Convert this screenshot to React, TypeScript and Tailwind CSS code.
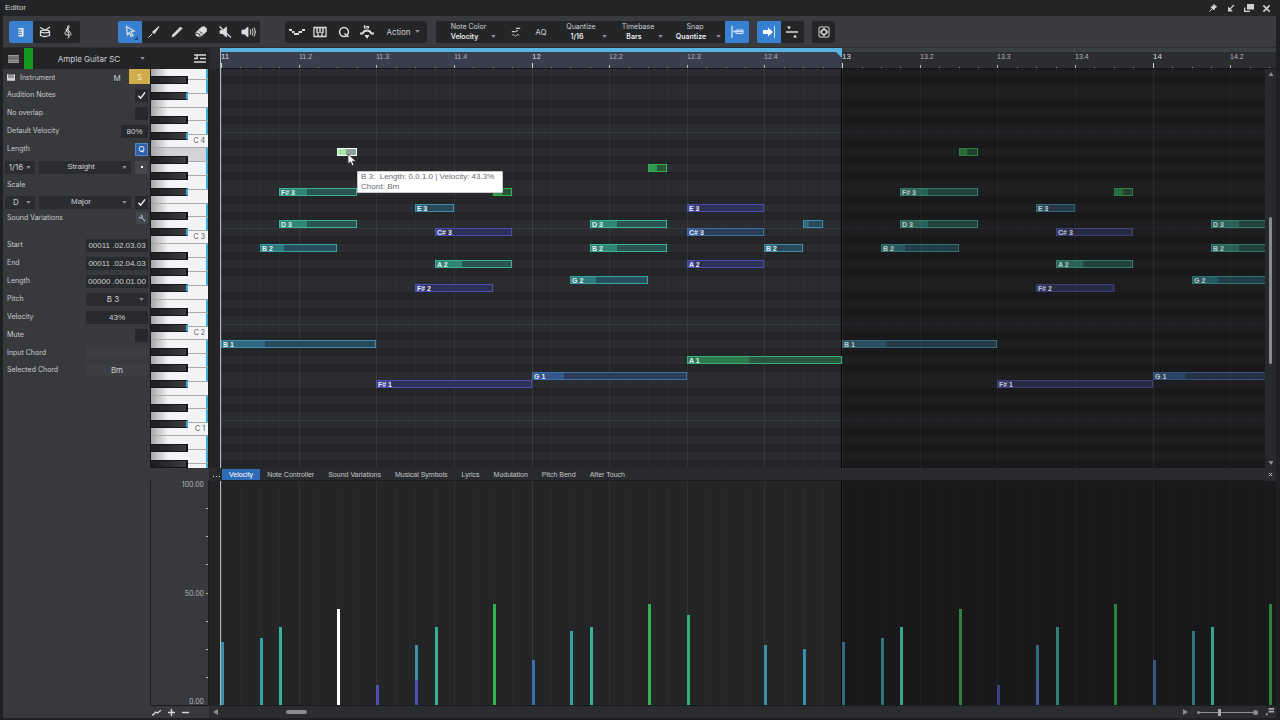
import React, { useState } from 'react';

interface Tone {
  line: string;
  fill: string;
  deep: string;
}

interface Note {
  start: number;
  length: number;
  pitch: number;
  velocity: number;
  tone: string;
}

const STEP = 19.41;
const ROW = 8;
const TOP_PITCH = 83;
const LOOP_END = 32;
const NAMES = ['C', 'C#', 'D', 'D#', 'E', 'F', 'F#', 'G', 'G#', 'A', 'A#', 'B'];
const SCALE = [1, 2, 4, 6, 7, 9, 11];

const TONES: Record<string, Tone> = {
  blue: { line: '#3b8fad', fill: '#29495a', deep: '#306a80' },
  cyan: { line: '#36a0a6', fill: '#28505a', deep: '#2f7a7e' },
  teal: { line: '#3bb097', fill: '#29544f', deep: '#318576' },
  mint: { line: '#35b072', fill: '#29593f', deep: '#2c7a52' },
  green: { line: '#35b04f', fill: '#28563a', deep: '#309848' },
  steel: { line: '#3d6fb0', fill: '#2c3d55', deep: '#33578c' },
  violet: { line: '#4c4faf', fill: '#2e3157', deep: '#3e4292' },
  picked: { line: '#ffffff', fill: '#8fa394', deep: '#a5e6aa' },
};

const n = (start: number, length: number, pitch: number, velocity: number, tone: string): Note => ({ start, length, pitch, velocity, tone });

const phrase = (at: number): Note[] => [
  n(at, 8, 47, 28, 'blue'),
  n(at + 2, 4, 59, 30, 'cyan'),
  n(at + 3, 4, 66, 35, 'teal'),
  n(at + 3, 4, 62, 35, 'teal'),
  n(at + 8, 8, 42, 9, 'violet'),
  n(at + 10, 2, 64, 27, 'blue'),
  n(at + 10, 4, 54, 11, 'violet'),
  n(at + 11, 4, 61, 9, 'violet'),
  n(at + 11, 4, 57, 35, 'teal'),
  n(at + 14, 1, 66, 45, 'green'),
  n(at + 16, 8, 43, 20, 'steel'),
  n(at + 18, 4, 55, 33, 'cyan'),
  n(at + 19, 4, 62, 35, 'teal'),
  n(at + 19, 4, 59, 35, 'teal'),
  n(at + 22, 1, 69, 45, 'green'),
];

const NOTES: Note[] = [
  ...phrase(0),
  n(6, 1, 71, 43, 'picked'),
  n(24, 8, 45, 40, 'mint'),
  n(24, 4, 64, 9, 'violet'),
  n(24, 4, 61, 17, 'steel'),
  n(24, 4, 57, 9, 'violet'),
  n(28, 2, 59, 27, 'blue'),
  n(30, 1, 62, 25, 'blue'),
  ...phrase(32),
  n(38, 1, 71, 43, 'green'),
];

const STEMS = [...NOTES]
  .filter(note => !(note.velocity === 9 && note.length === 4) && note.velocity !== 17)
  .sort((a, b) => b.velocity - a.velocity);

const ROWS = Array.from({ length: 52 }, (_, i) => TOP_PITCH - i);
const STEPS = Array.from({ length: 120 }, (_, i) => i);
const BEATS = Array.from({ length: 14 }, (_, i) => i);

const xAt = (step: number) => Math.round(step * STEP);
const noteName = (pitch: number) => `${NAMES[pitch % 12]} ${Math.floor(pitch / 12) - 2}`;

const Caret = () => (
  <svg viewBox="0 0 6 4" className="w-[5px] h-[3px] shrink-0 fill-[#8d8e91] pointer-events-none">
    <path d="M0 0h6L3 4z" />
  </svg>
);

interface PickerProps {
  id: string;
  value: string;
  className?: string;
  bold?: boolean;
}

const Picker: React.FC<PickerProps> = ({ id, value, className, bold }) => (
  <div className={`relative flex items-center ${className ?? ''}`}>
    <select
      id={id}
      aria-label={id}
      defaultValue={value}
      className={`appearance-none w-full bg-transparent text-center outline-none pr-2 ${bold ? 'font-semibold text-[#ededee]' : 'text-[#cfd0d2]'}`}
    >
      <option>{value}</option>
    </select>
    <span className="absolute right-1 flex"><Caret /></span>
  </div>
);

const Check: React.FC<{ id: string; on?: boolean }> = ({ id, on }) => (
  <span className="relative flex size-[13px] items-center justify-center bg-[#27282b]">
    <input id={id} type="checkbox" aria-label={id} defaultChecked={on} className="peer absolute inset-0 appearance-none" />
    <svg viewBox="0 0 10 10" className="size-[9px] hidden peer-checked:block pointer-events-none" fill="none" stroke="#f3f3f3" strokeWidth="1.6">
      <path d="M1.5 5.2 4 8 9 1.5" />
    </svg>
  </span>
);

const Field: React.FC<{ id: string; value: string; className?: string }> = ({ id, value, className }) => (
  <input
    id={id}
    defaultValue={value}
    className={`h-[13px] bg-[#292a2d] text-center font-['Liberation_Sans',sans-serif] text-[8px] text-[#cfd0d2] outline-none ${className ?? 'w-[62px]'}`}
  />
);

const Row: React.FC<{ label: string; htmlFor?: string; className?: string; children?: React.ReactNode }> = ({ label, htmlFor, className, children }) => (
  <div className={`flex items-center justify-between pl-1 pr-[2px] ${className ?? 'h-[18px]'}`}>
    {htmlFor ? <label htmlFor={htmlFor}>{label}</label> : <span>{label}</span>}
    {children}
  </div>
);

const ToolButton: React.FC<{ label: string; active?: boolean; children: React.ReactNode }> = ({ label, active, children }) => (
  <button aria-label={label} className={`relative flex h-[22px] flex-1 items-center justify-center ${active ? 'bg-[#3a80d0]' : ''}`}>
    <svg viewBox="0 0 16 16" className="size-4" fill="none" stroke="#dcdddf" strokeWidth="1.3">
      {children}
    </svg>
  </button>
);

const TitleBar = () => (
  <header className="flex h-4 shrink-0 items-center justify-between bg-[#232426] pl-[2px] pr-[9px]">
    <h1 className="font-['Liberation_Sans',sans-serif] text-[8px] text-[#cfd0d1]">Editor</h1>
    <div className="flex items-center gap-2">
      <button aria-label="Pin">
        <svg viewBox="0 0 10 10" className="size-[10px]" fill="#d0d1d3" stroke="#d0d1d3"><path d="M6 1.5 8.5 4 7 4.8 5.8 7 3 4.2 5.2 3z" /><path d="M4 6 1.5 8.5" /></svg>
      </button>
      <button aria-label="Dock">
        <svg viewBox="0 0 10 10" className="size-[10px]" fill="none" stroke="#d0d1d3" strokeWidth="1.3"><path d="M8 2 3 7" /><path d="M2 3.500v5h5z" fill="#d0d1d3" stroke="none" /></svg>
      </button>
      <button aria-label="Detach">
        <svg viewBox="0 0 10 10" className="size-[10px]" fill="#d0d1d3"><path d="M3 1h7v5.500H3z" /><path d="M0 4.500v4.500h6v-1.200H1.300v-3.300z" /></svg>
      </button>
      <button aria-label="Close">
        <svg viewBox="0 0 10 10" className="size-[9px]" stroke="#d0d1d3" strokeWidth="1.7"><path d="m1.500 1.500 7 7m0-7-7 7" /></svg>
      </button>
    </div>
  </header>
);

const GROUP = 'flex h-[22px] items-center overflow-hidden rounded-[2px] bg-[#242527]';

const Toolbar = () => (
  <div className="flex h-8 shrink-0 items-center border-b border-[#2b2c2f] bg-[#3a3b3f] pl-[6px] mr-1">
    <div className={`${GROUP} w-[71px]`}>
      <ToolButton label="Piano view" active>
        <path d="M5.500 4h5v8.500h-5z" fill="#f4f4f4" stroke="none" />
        <path d="M5.500 6H9M5.500 8.200H9M5.500 10.400H9" stroke="#2c65ab" strokeWidth="1" />
      </ToolButton>
      <ToolButton label="Drum view">
        <path d="M3.500 7.500v4q4.500 2 9 0v-4" />
        <ellipse cx="8" cy="7.500" rx="4.500" ry="1.300" />
        <path d="m3 3.500 5 2.500M13 3 8.500 6" />
      </ToolButton>
      <ToolButton label="Score view">
        <path d="M7.500 14q2 0 1.500-2L7.500 4q0-2.500 1.300-2.500Q10.500 3.500 6.500 7T8 11.200t1-4.200-2 1.500" strokeWidth="1" />
      </ToolButton>
    </div>

    <div className={`${GROUP} ml-[38px] w-[142px]`}>
      <ToolButton label="Arrow tool" active>
        <path d="m4.500 2.500 7.500 4.500-3 .8 2 3.700-1.800.9-1.900-3.700-2 2.100z" />
        <path d="M16 12v4h-4z" fill="#1f4a80" stroke="none" />
      </ToolButton>
      <ToolButton label="Split tool">
        <path d="m13 2.500-4.500 7-2-1.500zM6.500 9.500 2.500 13.500" fill="#dcdddf" strokeWidth="1" />
      </ToolButton>
      <ToolButton label="Paint tool">
        <path d="m3 13 1-2.500L11.500 3 13 4.500 5.500 12z" fill="#dcdddf" strokeWidth=".8" />
      </ToolButton>
      <ToolButton label="Eraser tool">
        <path d="M8 3.500 11 2.500l2.500 2v3L7 13l-4-1.500v-3z" fill="#dcdddf" strokeWidth=".6" />
        <path d="m6.500 7.500 3 2M3 9l4 1.500V13" stroke="#242527" strokeWidth=".9" />
      </ToolButton>
      <ToolButton label="Mute tool">
        <path d="M3 6.500h2.500L9.500 3v10L5.500 9.500H3z" fill="#dcdddf" strokeWidth=".8" />
        <path d="m2.500 2.500 11.500 11" />
      </ToolButton>
      <ToolButton label="Listen tool">
        <path d="M2 6h2.500L8 3v10l-3.500-3H2z" fill="#dcdddf" strokeWidth=".8" />
        <path d="M10 5.500q1.500 2.500 0 5M12 4.500q2.300 3.500 0 7M14 3.500q3 4.500 0 9" strokeWidth="1" />
      </ToolButton>
    </div>

    <div className={`${GROUP} ml-[25px] w-[142px]`}>
      <ToolButton label="Curve">
        <path d="M0 6h3M3 8h2.500M5 10h5M9.500 8H13M13 6h3" strokeWidth="2" />
      </ToolButton>
      <ToolButton label="Keys">
        <path d="M2 3.500h12v9H2zM6 8v4M10 8v4" />
        <path d="M5 4v5M8 4v5M11 4v5" strokeWidth="1.500" />
      </ToolButton>
      <ToolButton label="Quantize panel">
        <circle cx="8" cy="8" r="4.400" strokeWidth="1.500" />
        <path d="m8.500 9.500 4 3.500" strokeWidth="1.500" />
      </ToolButton>
      <ToolButton label="Humanize">
        <path d="M5.500 1v3h4V2.500h-3" strokeWidth="1.200" />
        <path d="M1 9.500h2.500Q5 6.500 8 6.500t4.500 3H15" strokeWidth="1.800" />
        <path d="M5.500 11h5L8 15z" fill="#dcdddf" stroke="none" />
      </ToolButton>
      <button className="flex w-[48px] items-center justify-center gap-[4px] text-[8px]">
        Action <Caret />
      </button>
    </div>

    <div className={`${GROUP} ml-[9px] w-[313px]`}>
      <div className="flex w-[65px] shrink-0 flex-col items-center">
        <label htmlFor="Note Color">Note Color</label>
        <Picker id="Note Color" value="Velocity" className="w-[62px]" bold />
      </div>
      <button aria-label="Input quantize" className="flex w-[30px] shrink-0 justify-center">
        <svg viewBox="0 0 12 12" className="size-[10px]" fill="none" stroke="#c9cacc" strokeWidth="1.500"><path d="M6 1.500h5M1 5.500h4.500M6 5.500l2-1.500" /><path d="M1 10q1.500-2 3 0t3 0 3 0" strokeWidth="1" /></svg>
      </button>
      <button className="w-[20px] shrink-0 text-center text-[8px]">AQ</button>
      <div className="flex w-[60px] shrink-0 flex-col items-center">
        <label htmlFor="Quantize">Quantize</label>
        <Picker id="Quantize" value="1/16" className="w-[60px]" bold />
      </div>
      <div className="flex w-[54px] shrink-0 flex-col items-center">
        <label htmlFor="Timebase">Timebase</label>
        <Picker id="Timebase" value="Bars" className="w-[58px]" bold />
      </div>
      <div className="flex w-[60px] shrink-0 flex-col items-center">
        <label htmlFor="Snap">Snap</label>
        <Picker id="Snap" value="Quantize" className="w-[60px]" bold />
      </div>
      <ToolButton label="Snap toggle" active>
        <path d="M3 2v12M4 7.500h10" stroke="#cfe2f7" />
        <path d="M7 6h7v3.500H7z" stroke="#cfe2f7" strokeWidth="1" />
      </ToolButton>
    </div>

    <div className={`${GROUP} ml-2 w-[47px]`}>
      <ToolButton label="Autoscroll" active>
        <path d="M2 6h5V3.500L12 8l-5 4.500V10H2z" fill="#fff" stroke="none" />
        <path d="M13.500 2v12" stroke="#cfe2f7" strokeWidth="1" />
      </ToolButton>
      <ToolButton label="Cursor follow">
        <path d="M2 8h12" strokeWidth="1.500" />
        <path d="M3 2.500h4L5 5.500zM9 13.500h4L11 10.500z" fill="#dcdddf" stroke="none" />
      </ToolButton>
    </div>

    <div className={`${GROUP} ml-2 w-[23px]`}>
      <ToolButton label="Open macro">
        <rect x="3" y="3" width="10" height="10" rx="1" strokeWidth="1" />
        <circle cx="8" cy="8" r="2.500" />
        <path d="M8 4v1.500M8 10.500V12M4 8h1.500M10.500 8H12" />
      </ToolButton>
    </div>
  </div>
);

const TrackHead = () => (
  <div className="flex h-full w-[207px] shrink-0 items-center bg-[#232426] pl-[5px] pr-[4px]">
    <button aria-label="Tracks">
      <svg viewBox="0 0 12 8" className="h-2 w-[11px]" stroke="#bfc0c2" strokeWidth="1.200"><path d="M0 .6h12M0 2.900h12M0 5.200h12M0 7.400h12" /></svg>
    </button>
    <span className="ml-[5px] h-full w-[9px] bg-[#14991f]" />
    <Picker id="Track" value="Ample Guitar SC" className="h-full flex-1 text-[8px] pl-1 mr-[45px]" />
    <button aria-label="Track list">
      <svg viewBox="0 0 12 9" className="h-[9px] w-3" fill="none" stroke="#d6d7d9" strokeWidth="1.300"><path d="M0 1h12M0 4.500h4M6 4.500h6M0 8h12M3 1v3" /></svg>
    </button>
  </div>
);

const Ruler = () => (
  <div className="relative h-full flex-1 overflow-hidden border-l border-[#b5b6b8] bg-[#2c2d31]">
    <div className="h-[4px] bg-[#3b4043]" />
    <div className="absolute left-0 top-0 h-full w-[621px] bg-[#393f4e] border-t-4 border-[#5ab4e2]" />
    <svg viewBox="0 0 6 6" className="absolute left-[615px] top-1 size-[6px] fill-[#5ab4e2]"><path d="M0 0h6v6z" /></svg>
    {STEPS.map(s => (
      <i
        key={s}
        className={`absolute bottom-0 w-px ${s % 16 === 0 ? 'h-[6px] bg-[#d6d7d9]' : s % 4 === 0 ? 'h-[4px] bg-[#b7b8ba]' : 'h-[2px] bg-[#8d8f94]'}`}
        style={{ left: xAt(s) }}
      />
    ))}
    {BEATS.map(b => (
      <span
        key={b}
        className={`absolute top-[4px] font-['Liberation_Sans',sans-serif] leading-[10px] ${b % 4 === 0 ? 'text-[8px] text-[#dcdddf]' : 'text-[7px] text-[#b4b6ba]'}`}
        style={{ left: xAt(b * 4) }}
      >
        {11 + Math.floor(b / 4)}{b % 4 ? `.${(b % 4) + 1}` : ''}
      </span>
    ))}
    <i className="absolute bottom-0 left-0 h-px w-full bg-[#17181a]" />
  </div>
);

const Inspector = () => (
  <aside className="flex w-[147px] shrink-0 flex-col bg-[#38393d] text-[#cacbcd]">
    <div className="flex h-[17px] items-center pl-1">
      <svg viewBox="0 0 10 8" className="h-[7px] w-2 fill-[#d6d7d9]"><path d="M0 0h2v5h1V0h1.500v5h1V0H7v5h1V0h2v8H0z" /></svg>
      <span className="ml-[5px] flex-1">Instrument</span>
      <button className="h-[15px] w-[24px] text-[8px]">M</button>
      <button className="h-[15px] w-[21px] self-start bg-[#d0ac4a] text-[8px] text-[#f4e9c8]">S</button>
    </div>
    <Row label="Audition Notes" htmlFor="audition"><Check id="audition" on /></Row>
    <Row label="No overlap" htmlFor="overlap"><Check id="overlap" /></Row>
    <Row label="Default Velocity" htmlFor="default-velocity"><Field id="default-velocity" value="80%" className="w-[27px]" /></Row>
    <Row label="Length"><button className="size-[13px] border border-[#4f87cc] bg-[#2b62ab] text-[8px] leading-[10px] text-white">Q</button></Row>
    <div className="flex h-[18px] items-center gap-1 pl-[2px] pr-[2px] text-[8px]">
      <Picker id="Note length" value="1/16" className="h-[13px] w-[30px] bg-[#2b2c2f]" />
      <Picker id="Note feel" value="Straight" className="h-[13px] flex-1 bg-[#2b2c2f] font-['Liberation_Sans',sans-serif]" />
      <button className="flex size-[13px] items-center justify-center bg-[#46474c]" aria-label="Dotted"><i className="size-[2px] bg-white" /></button>
    </div>
    <Row label="Scale" />
    <div className="flex h-[16px] items-center gap-1 pl-[2px] pr-[2px] text-[8px]">
      <Picker id="Scale root" value="D" className="h-[13px] w-[30px] bg-[#2b2c2f]" />
      <Picker id="Scale type" value="Major" className="h-[13px] flex-1 bg-[#2b2c2f] font-['Liberation_Sans',sans-serif]" />
      <Check id="Scale snap" on />
    </div>
    <Row label="Sound Variations" className="h-[16px]">
      <button aria-label="Edit variations" className="flex size-[12px] items-center justify-center bg-[#46474d]">
        <svg viewBox="0 0 10 10" className="size-2" fill="none" stroke="#b9c4e0" strokeWidth="1.300"><path d="M5 5 9 9M1 3.500q3 3 4.500 0L4 1" /></svg>
      </button>
    </Row>
    <div className="mt-[10px]">
      <Row label="Start" htmlFor="start"><Field id="start" value="00011 .02.03.03" /></Row>
      <Row label="End" htmlFor="end"><Field id="end" value="00011 .02.04.03" /></Row>
      <Row label="Length" htmlFor="length"><Field id="length" value="00000 .00.01.00" /></Row>
      <Row label="Pitch" htmlFor="pitch"><Picker id="pitch" value="B 3" className="h-[13px] w-[62px] bg-[#2b2c2f] text-[8px]" /></Row>
      <Row label="Velocity" htmlFor="velocity"><Field id="velocity" value="43%" /></Row>
      <Row label="Mute" htmlFor="mute"><Check id="mute" /></Row>
      <Row label="Input Chord" className="h-[17px]"><span className="h-[12px] w-[62px] bg-[#3d3e42]" /></Row>
      <Row label="Selected Chord"><span className="h-[12px] w-[62px] bg-[#3d3e42] text-center text-[8px] leading-[12px]">Bm</span></Row>
    </div>
  </aside>
);

const WhiteKey: React.FC<{ pitch: number }> = ({ pitch }) => {
  const inScale = SCALE.includes(pitch % 12);
  return (
    <div className={`flex flex-1 items-center justify-end border-b border-[#a9abad] bg-linear-to-r from-[#a5a6a8] to-30% ${pitch === 71 ? 'to-[#d3d4d8]' : 'to-[#f3f4f5]'}`}>
      {pitch % 12 === 0 && pitch > 24 && <span className="text-[7px] leading-none text-[#55565a] pr-px">C {pitch / 12 - 2}</span>}
      <i className={`h-full w-[2px] ${inScale ? 'bg-[#3ea9dc]' : ''}`} />
    </div>
  );
};

const Keyboard = () => (
  <div className="w-[59px] shrink-0 overflow-hidden border-l border-r border-[#1b1c1e] bg-white">
    <div className="-mt-[17px]">
      {[72, 60, 48, 36, 24].map(base => (
        <div key={base} className="relative h-[96px]">
          <div className="flex h-[56px] flex-col">
            {[11, 9, 7, 5].map(k => <WhiteKey key={k} pitch={base + k} />)}
          </div>
          <div className="flex h-[40px] flex-col">
            {[4, 2, 0].map(k => <WhiteKey key={k} pitch={base + k} />)}
          </div>
          {[10, 8, 6, 3, 1].map(k => (
            <div
              key={k}
              className={`absolute left-0 h-[8px] w-[37px] border-y border-r-2 border-[#151617] bg-linear-to-r from-[#1b1c1e] to-[#3c3d40] ${SCALE.includes(k) ? 'border-r-[#3ea9dc]' : ''}`}
              style={{ top: (11 - k) * ROW }}
            />
          ))}
        </div>
      ))}
    </div>
  </div>
);

const GridLines = () => (
  <>
    {STEPS.map(s => (
      <i
        key={s}
        className={`absolute top-0 h-full w-px ${s % 16 === 0 ? 'bg-white/9' : s % 4 === 0 ? 'bg-white/6' : 'bg-white/2'}`}
        style={{ left: xAt(s) }}
      />
    ))}
    <div className="absolute inset-y-0 left-[620px] right-0 border-l border-black bg-black/30" />
  </>
);

const NoteGrid = () => (
  <div className="relative flex-1 overflow-hidden border-l border-[#b5b6b8]">
    <div className="absolute inset-x-0 -top-[17px]">
      {ROWS.map(p => (
        <div
          key={p}
          className={`h-[8px] ${SCALE.includes(p % 12) ? 'bg-[#2b2c2f]' : 'bg-[#242527]'} ${p % 12 === 1 ? 'border-t border-[#34373f]' : ''}`}
        />
      ))}
    </div>
    <GridLines />
    <div className="absolute inset-x-0 -top-[17px]">
      {NOTES.map((note, i) => {
        const tone = TONES[note.tone];
        const left = xAt(note.start);
        return (
          <div
            key={i}
            className={`absolute h-[8px] overflow-hidden border ${note.start < LOOP_END ? '' : 'opacity-65'}`}
            style={{ left, width: xAt(note.start + note.length) - left, top: (TOP_PITCH - note.pitch) * ROW, borderColor: tone.line, background: tone.fill }}
          >
            <i className="absolute inset-y-0 left-0" style={{ width: `${note.velocity}%`, background: tone.deep }} />
          </div>
        );
      })}
      {NOTES.filter(note => note.length > 1).map((note, i) => (
        <span
          key={i}
          className={`absolute pl-[2px] font-['Liberation_Sans',sans-serif] text-[7px] font-bold leading-[9px] ${note.start < LOOP_END ? 'text-[#e9f0f0]' : 'text-[#c3caca]'}`}
          style={{ left: xAt(note.start), top: (TOP_PITCH - note.pitch) * ROW }}
        >
          {noteName(note.pitch)}
        </span>
      ))}
    </div>
    <div className="absolute left-[136px] top-[102px] h-[22px] w-[146px] whitespace-pre rounded-[1px] border border-[#c9c9cc] bg-white pl-[3px] font-['Liberation_Sans',sans-serif] text-[8px] leading-[10px] text-[#6c6a72]">
      {'B 3:  Length: 0.0.1.0 | Velocity: 43.3%\nChord: Bm'}
    </div>
    <svg viewBox="0 0 10 14" className="absolute left-[126px] top-[84px] h-[14px] w-[10px]" fill="#fff" stroke="#222" strokeWidth=".7">
      <path d="M1 1v10l2.500-2.200 1.700 4 1.800-.8-1.700-3.800H9z" />
    </svg>
  </div>
);

const VerticalScroll = () => (
  <div className="flex w-[11px] shrink-0 flex-col items-center bg-[#28292c] py-[3px]">
    <svg viewBox="0 0 6 5" className="h-[4px] w-[6px] fill-[#8d8e91]"><path d="M3 0 6 5H0z" /></svg>
    <div className="w-[3px] flex-1 pt-[141px]">
      <div className="h-[147px] w-full rounded-full bg-[#8a8b8e]" />
    </div>
    <svg viewBox="0 0 6 5" className="h-[4px] w-[6px] fill-[#8d8e91]"><path d="M0 0h6L3 5z" /></svg>
  </div>
);

const LANES = ['Velocity', 'Note Controller', 'Sound Variations', 'Musical Symbols', 'Lyrics', 'Modulation', 'Pitch Bend', 'After Touch'];

const LaneTabs = () => {
  const [lane, setLane] = useState('Velocity');
  return (
    <div className="flex h-[13px] shrink-0 bg-[#292a2d] font-['Liberation_Sans',sans-serif] text-[7px]">
      <div className="w-[59px] bg-[#38393d]" />
      <button aria-label="More lanes" className="flex w-[13px] items-center justify-center gap-[2px] pl-[2px] pt-1">
        <i className="size-px bg-[#d6d7d9]" />
        <i className="size-px bg-[#d6d7d9]" />
        <i className="size-px bg-[#d6d7d9]" />
      </button>
      <nav className="flex flex-1 border-b border-[#1a1b1d]">
        {LANES.map(name => (
          <button
            key={name}
            onClick={() => setLane(name)}
            className={`h-[11px] self-center px-[7px] leading-[11px] ${name === lane ? 'bg-[#2f6cb8] text-white' : 'text-[#c6c7c9]'}`}
          >
            {name}
          </button>
        ))}
      </nav>
      <button aria-label="Close lane" className="flex w-[11px] items-center justify-center">
        <svg viewBox="0 0 6 6" className="size-[5px]" stroke="#b4b5b7" strokeWidth="1.200"><path d="m1 1 4 4m0-4-4 4" /></svg>
      </button>
    </div>
  );
};

const VelocityLane = () => (
  <div className="flex min-h-[120px] flex-1">
    <div className="relative flex w-[59px] shrink-0 flex-col justify-between border border-t-0 border-[#1b1c1e] bg-[#38393d] pr-1 text-right text-[7px] leading-[7px] text-[#b4b5b7]">
      <span>100.00</span>
      <span>50.00</span>
      <span>0.00</span>
      <div className="absolute inset-y-0 right-0 flex flex-col justify-evenly">
        {[1, 2, 3, 4, 5, 6, 7].map(t => <i key={t} className="h-px w-[2px] bg-[#b4b5b7]" />)}
      </div>
    </div>
    <div className="w-[11px] shrink-0 bg-[#232426]" />
    <div className="relative flex-1 overflow-hidden border-l border-b border-[#b5b6b8] border-b-[#1a1b1d] bg-[#242527]">
      <GridLines />
      {STEMS.map((note, i) => (
        <i
          key={i}
          className={`absolute bottom-0 w-[3px] ${note.start < LOOP_END ? '' : 'opacity-70'}`}
          style={{ left: xAt(note.start), height: `${note.velocity}%`, background: TONES[note.tone].line }}
        />
      ))}
    </div>
  </div>
);

const Footer = () => (
  <div className="flex h-[12px] shrink-0 items-center bg-[#2b2c2f]">
    <div className="flex h-full w-[59px] items-center gap-[7px] bg-[#38393d] pl-[2px]">
      <button aria-label="Show curve"><svg viewBox="0 0 10 7" className="h-[7px] w-[9px]" fill="none" stroke="#d6d7d9" strokeWidth="1.400"><path d="M0 6h1.500L4 3l2 1L10 1" /></svg></button>
      <button aria-label="Zoom in"><svg viewBox="0 0 6 6" className="size-[7px]" stroke="#d6d7d9" strokeWidth="1.200"><path d="M0 3h6M3 0v6" /></svg></button>
      <button aria-label="Zoom out"><svg viewBox="0 0 6 6" className="size-[7px]" stroke="#d6d7d9" strokeWidth="1.200"><path d="M0 3h6" /></svg></button>
    </div>
    <svg viewBox="0 0 5 6" className="ml-[4px] h-[6px] w-[5px] fill-[#8d8e91]"><path d="M5 0v6L0 3z" /></svg>
    <div className="flex-1 pl-[68px]">
      <div className="h-[4px] w-[21px] rounded-full bg-[#8a8b8e]" />
    </div>
    <svg viewBox="0 0 5 6" className="h-[6px] w-[5px] fill-[#8d8e91]"><path d="M0 0v6l5-3z" /></svg>
    <div className="relative ml-[9px] flex w-[61px] items-center">
      <input
        type="range"
        aria-label="Horizontal zoom"
        defaultValue="36"
        className="h-px w-full appearance-none bg-[#8d8e91] [&::-webkit-slider-thumb]:h-[7px] [&::-webkit-slider-thumb]:w-[3px] [&::-webkit-slider-thumb]:appearance-none [&::-webkit-slider-thumb]:bg-[#a7a8aa]"
      />
      <i className="absolute left-0 size-[3px] rounded-full bg-[#8d8e91]" />
      <i className="absolute right-0 size-[5px] rounded-full bg-[#8d8e91]" />
    </div>
    <svg viewBox="0 0 10 10" className="ml-[7px] mr-[2px] size-[9px] fill-[#a7a8aa]"><path d="M4 0h6v2H4zM4 3h6v2H4zM1 6h2v2H1z" /></svg>
  </div>
);

const App = () => (
  <div className="flex h-screen min-h-[640px] flex-col overflow-hidden bg-[#1f2022] pb-[2px] pl-[3px] font-['Inter','Liberation_Sans',sans-serif] text-[7px] leading-[10px] text-[#d2d3d5]">
    <TitleBar />
    <Toolbar />
    <div className="flex h-[21px] shrink-0 pr-1">
      <TrackHead />
      <div className="w-[10px] bg-[#2b2c2f]" />
      <Ruler />
    </div>
    <div className="flex flex-1 pr-1">
      <Inspector />
      <main className="flex min-w-0 flex-1 flex-col">
        <div className="flex h-[399px] shrink-0 overflow-hidden">
          <Keyboard />
          <div className="w-[11px] shrink-0 bg-[#232426]" />
          <NoteGrid />
          <VerticalScroll />
        </div>
        <LaneTabs />
        <VelocityLane />
        <Footer />
      </main>
    </div>
  </div>
);

export default App;
